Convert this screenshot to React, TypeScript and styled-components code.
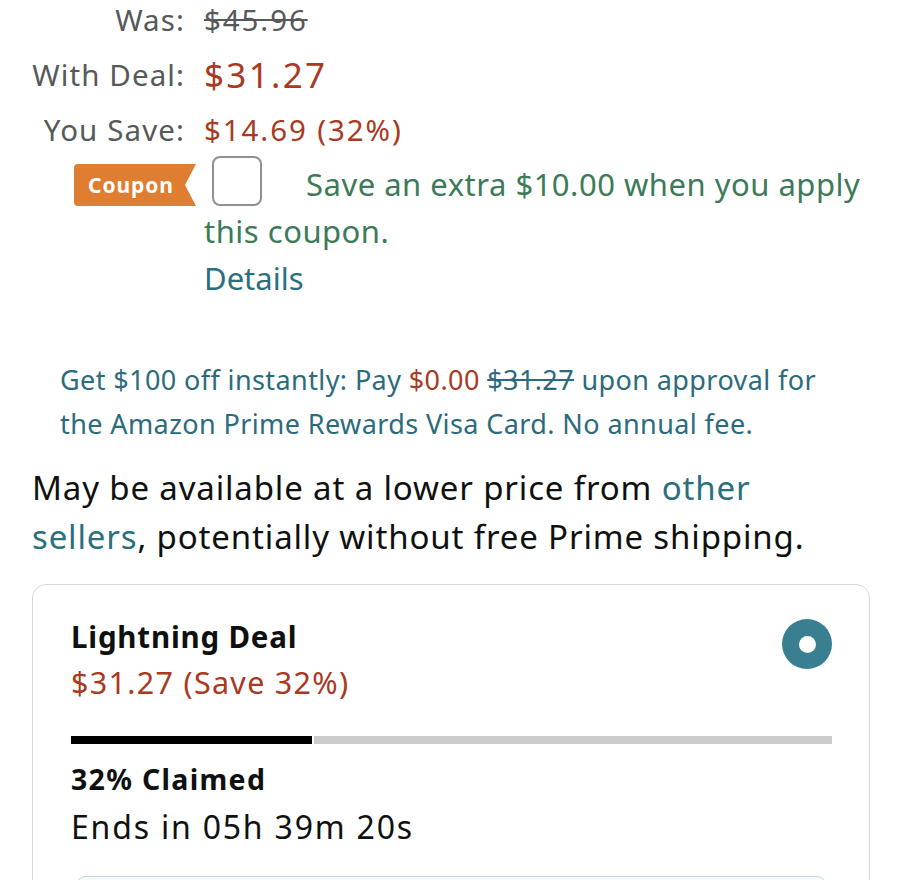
import React from "react";
import styled, { createGlobalStyle } from "styled-components";

const Global = createGlobalStyle`
  html, body { margin: 0; padding: 0; background: #ffffff; }
  body { font-family: "Noto Sans", "Open Sans", sans-serif; color: #0f1111; overflow: hidden; }
`;

const Page = styled.div`
  width: 900px;
  height: 880px;
  overflow: hidden;
  box-sizing: border-box;
  padding: 0 30px 0 32px;
`;

const PriceTable = styled.div`
  display: grid;
  grid-template-columns: 153px 1fr;
  column-gap: 19px;
  row-gap: 15px;
  align-items: center;
`;

const Label = styled.div`
  justify-self: end;
  font-size: 29.5px;
  letter-spacing: 1.1px;
  line-height: 40px;
  color: #565959;
  white-space: nowrap;
`;

const Value = styled.div<{ $tone?: "strike" | "deal" | "save" }>`
  font-size: ${(p) => (p.$tone === "deal" ? "35px" : "29.5px")};
  letter-spacing: ${(p) => (p.$tone === "deal" ? "2.3px" : "1.9px")};
  line-height: 40px;
  color: ${(p) => (p.$tone === "strike" ? "#565959" : "#a9391f")};
  text-decoration: ${(p) => (p.$tone === "strike" ? "line-through" : "none")};
  text-decoration-thickness: 2px;
  white-space: nowrap;
`;

const CouponRow = styled.div`
  display: grid;
  grid-template-columns: 153px 1fr;
  column-gap: 19px;
  margin-top: 6px;
`;

const Badge = styled.div`
  justify-self: end;
  margin-right: -11px;
  margin-top: 8px;
  height: 42px;
  width: 122px;
  box-sizing: border-box;
  padding-left: 14px;
  display: flex;
  align-items: center;
  background: #df7d31;
  color: #ffffff;
  font-size: 21px;
  letter-spacing: 0.9px;
  font-weight: 700;
  border-radius: 4px 0 0 4px;
  clip-path: polygon(0 0, 100% 0, 91% 50%, 100% 100%, 0 100%);
`;

const CouponText = styled.div`
  font-size: 31px;
  letter-spacing: 0.5px;
  line-height: 47px;
  color: #3c7a58;
`;

const CheckBox = styled.span`
  display: inline-block;
  vertical-align: -10px;
  width: 50px;
  height: 50px;
  box-sizing: border-box;
  margin: 0 44px 0 8px;
  border: 2px solid #8d9096;
  border-radius: 8px;
  background: #ffffff;
`;

const DetailsLink = styled.div`
  color: #2a6f80;
  letter-spacing: 0px;
`;

const Offer = styled.p`
  margin: 56px 0 0 28px;
  padding-right: 20px;
  font-size: 27px;
  letter-spacing: 0.4px;
  line-height: 44px;
  color: #2b6b7c;
`;

const Red = styled.span`
  color: #a9391f;
`;

const Struck = styled.span`
  text-decoration: line-through;
`;

const Availability = styled.p`
  margin: 17px 0 0 0;
  padding-right: 38px;
  font-size: 33px;
  letter-spacing: 0.85px;
  line-height: 49px;
  color: #0f1111;
`;

const Link = styled.span`
  color: #2a6f80;
`;

const Card = styled.div`
  margin-top: 23px;
  border: 1.5px solid #d5d9d9;
  border-radius: 14px;
  padding: 32px 37px 0 38px;
  width: 838px;
  box-sizing: border-box;
  height: 320px;
  overflow: hidden;
`;

const CardHead = styled.div`
  display: flex;
  justify-content: space-between;
  align-items: flex-start;
`;

const Title = styled.div`
  font-size: 29.5px;
  letter-spacing: 0.8px;
  font-weight: 700;
  line-height: 40px;
  color: #0f1111;
`;

const DealPrice = styled.div`
  margin-top: 1px;
  font-size: 30.5px;
  letter-spacing: 1.3px;
  line-height: 48px;
  color: #a9391f;
`;

const Radio = styled.div`
  margin-top: 2px;
  width: 50px;
  height: 50px;
  border-radius: 50%;
  background: #3a7e92;
  display: flex;
  align-items: center;
  justify-content: center;
  &::after {
    content: "";
    width: 17px;
    height: 17px;
    border-radius: 50%;
    background: #ffffff;
  }
`;

const Bar = styled.div`
  margin-top: 30px;
  display: flex;
  height: 8px;
  gap: 2px;
`;

const BarFill = styled.div`
  background: #000000;
  height: 8px;
`;

const BarRest = styled.div`
  flex: 1;
  background: #cccccc;
  height: 8px;
`;

const Claimed = styled.div`
  margin-top: 15px;
  font-size: 28.5px;
  letter-spacing: 1.3px;
  font-weight: 700;
  line-height: 40px;
  color: #0f1111;
`;

const Ends = styled.div`
  margin-top: 4px;
  font-size: 32px;
  letter-spacing: 1.8px;
  line-height: 48px;
  color: #0f1111;
`;

const ActionBox = styled.div`
  margin: 25px 5px 0 5px;
  height: 70px;
  border: 1.5px solid #c3d9dd;
  border-radius: 10px;
  background: #f7fafa;
`;

export default function App() {
  const claimed = 31.7;
  return (
    <>
      <Global />
      <Page>
        <PriceTable>
          <Label>Was:</Label>
          <Value $tone="strike">$45.96</Value>
          <Label>With Deal:</Label>
          <Value $tone="deal">$31.27</Value>
          <Label>You Save:</Label>
          <Value $tone="save">$14.69 (32%)</Value>
        </PriceTable>
        <CouponRow>
          <Badge>Coupon</Badge>
          <CouponText>
            <CheckBox />
            Save an extra $10.00 when you apply this coupon.
            <DetailsLink>Details</DetailsLink>
          </CouponText>
        </CouponRow>
        <Offer>
          Get $100 off instantly: Pay <Red>$0.00</Red> <Struck>$31.27</Struck> upon approval for
          the Amazon Prime Rewards Visa Card. No annual fee.
        </Offer>
        <Availability>
          May be available at a lower price from <Link>other sellers</Link>, potentially without
          free Prime shipping.
        </Availability>
        <Card>
          <CardHead>
            <div>
              <Title>Lightning Deal</Title>
              <DealPrice>$31.27 (Save 32%)</DealPrice>
            </div>
            <Radio />
          </CardHead>
          <Bar>
            <BarFill style={{ width: `${claimed}%` }} />
            <BarRest />
          </Bar>
          <Claimed>32% Claimed</Claimed>
          <Ends>Ends in 05h 39m 20s</Ends>
          <ActionBox />
        </Card>
      </Page>
    </>
  );
}
